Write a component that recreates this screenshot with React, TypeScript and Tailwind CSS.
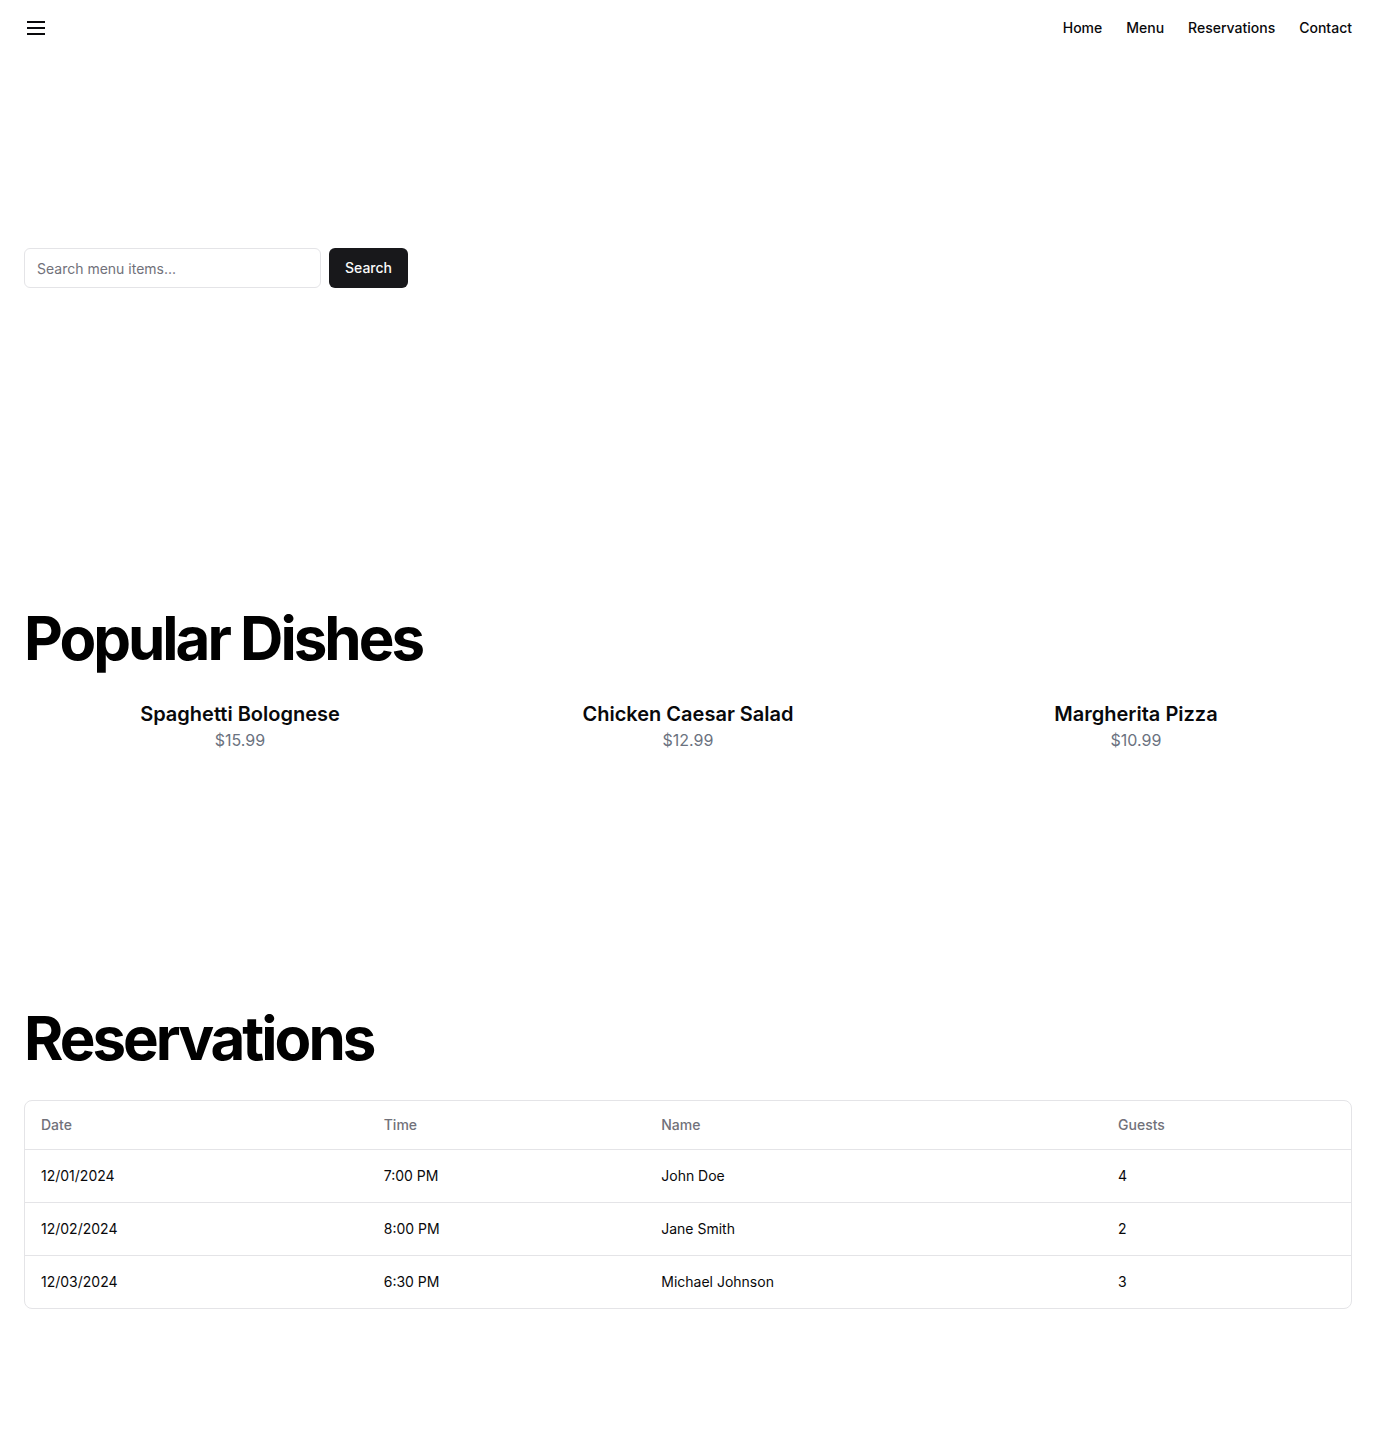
import React from "react";

const dishes = [
  { name: "Spaghetti Bolognese", price: "$15.99" },
  { name: "Chicken Caesar Salad", price: "$12.99" },
  { name: "Margherita Pizza", price: "$10.99" },
];

const reservations = [
  { date: "12/01/2024", time: "7:00 PM", name: "John Doe", guests: "4" },
  { date: "12/02/2024", time: "8:00 PM", name: "Jane Smith", guests: "2" },
  { date: "12/03/2024", time: "6:30 PM", name: "Michael Johnson", guests: "3" },
];

export default function App() {
  return (
    <div
      className="flex min-h-screen flex-col bg-white text-[#09090b]"
      style={{ fontFamily: "Inter, 'Noto Sans', sans-serif" }}
    >
      <header className="flex h-14 items-center px-6">
        <button className="flex h-6 w-6 items-center justify-center">
          <svg
            width="24"
            height="24"
            viewBox="0 0 24 24"
            fill="none"
            stroke="currentColor"
            strokeWidth="2"
            strokeLinecap="butt"
          >
            <line x1="3" y1="6" x2="21" y2="6" />
            <line x1="3" y1="12" x2="21" y2="12" />
            <line x1="3" y1="18" x2="21" y2="18" />
          </svg>
        </button>
        <nav className="ml-auto flex gap-6">
          <a className="text-sm font-medium">Home</a>
          <a className="text-sm font-medium">Menu</a>
          <a className="text-sm font-medium">Reservations</a>
          <a className="text-sm font-medium">Contact</a>
        </nav>
      </header>
      <main className="flex-1">
        <section className="w-full py-48">
          <div className="px-6">
            <form className="flex w-full max-w-sm gap-2">
              <input
                className="h-10 min-w-0 flex-1 rounded-md border border-[#e4e4e7] bg-white px-3 text-sm placeholder:text-[#71717a] outline-none"
                placeholder="Search menu items..."
                type="text"
              />
              <button
                type="button"
                className="h-10 rounded-md bg-[#18181b] px-4 text-sm font-medium text-[#fafafa]"
              >
                Search
              </button>
            </form>
          </div>
        </section>
        <section className="w-full py-32">
          <div className="px-6">
            <h2 className="text-6xl/none font-bold tracking-tighter text-black">
              Popular Dishes
            </h2>
            <div className="mt-8 grid grid-cols-3 gap-4">
              {dishes.map((d) => (
                <div key={d.name} className="flex flex-col items-center text-center">
                  <h3 className="text-xl font-semibold">{d.name}</h3>
                  <p className="text-base text-[#6b7280]">{d.price}</p>
                </div>
              ))}
            </div>
          </div>
        </section>
        <section className="w-full py-32">
          <div className="px-6">
            <h2 className="text-6xl/none font-bold tracking-tighter text-black">
              Reservations
            </h2>
            <div className="mt-8 overflow-hidden rounded-lg border border-[#e4e4e7]">
              <table className="w-full text-sm">
                <thead>
                  <tr className="border-b border-[#e4e4e7]">
                    <th className="h-12 px-4 text-left align-middle font-medium text-[#71717a]">Date</th>
                    <th className="h-12 px-4 text-left align-middle font-medium text-[#71717a]">Time</th>
                    <th className="h-12 px-4 text-left align-middle font-medium text-[#71717a]">Name</th>
                    <th className="h-12 px-4 text-left align-middle font-medium text-[#71717a]">Guests</th>
                  </tr>
                </thead>
                <tbody>
                  {reservations.map((r, i) => (
                    <tr
                      key={r.date}
                      className={i < reservations.length - 1 ? "border-b border-[#e4e4e7]" : ""}
                    >
                      <td className="p-4 align-middle">{r.date}</td>
                      <td className="p-4 align-middle">{r.time}</td>
                      <td className="p-4 align-middle">{r.name}</td>
                      <td className="p-4 align-middle">{r.guests}</td>
                    </tr>
                  ))}
                </tbody>
              </table>
            </div>
          </div>
        </section>
      </main>
    </div>
  );
}
